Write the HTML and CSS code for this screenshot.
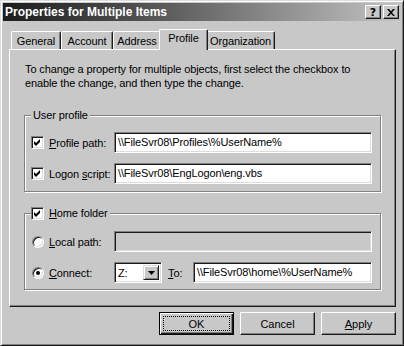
FILE: index.html
```html
<!DOCTYPE html>
<html lang="en">
  <head>
    <meta charset="UTF-8" />
    <title>Properties for Multiple Items</title>
    <link rel="stylesheet" href="styles.css">
  </head>
  <body>
    <div class="window">
      <div class="titlebar">
        <span class="title">Properties for Multiple Items</span>
        <div class="caption">
          <button class="cap">?</button>
          <button class="cap">
            <svg width="8" height="7" viewBox="0 0 8 7"><path d="M0 0h2l2 2.2L6 0h2L5 3.5L8 7H6L4 4.8L2 7H0l3-3.5z" fill="#000"/></svg>
          </button>
        </div>
      </div>

      <div class="tabs">
        <div class="tab t-general">General</div>
        <div class="tab t-account">Account</div>
        <div class="tab t-address">Address</div>
        <div class="tab t-profile active">Profile</div>
        <div class="tab t-org">Organization</div>
      </div>

      <div class="panel">
        <p class="intro">To change a property for multiple objects, first select the checkbox to<br>enable the change, and then type the change.</p>

        <fieldset class="group">
          <legend>User profile</legend>
          <div class="row">
            <span class="check on"></span>
            <span class="lbl"><u>P</u>rofile path:</span>
            <span class="field wide">\\FileSvr08\Profiles\%UserName%</span>
          </div>
          <div class="row">
            <span class="check on"></span>
            <span class="lbl">Logon <u>s</u>cript:</span>
            <span class="field wide">\\FileSvr08\EngLogon\eng.vbs</span>
          </div>
        </fieldset>

        <fieldset class="group home">
          <legend><span class="check on"></span><u>H</u>ome folder</legend>
          <div class="row">
            <span class="radio"></span>
            <span class="lbl"><u>L</u>ocal path:</span>
            <span class="field wide disabled"></span>
          </div>
          <div class="row">
            <span class="radio on"></span>
            <span class="lbl"><u>C</u>onnect:</span>
            <span class="combo">
              <span class="combo-text">Z:</span>
              <span class="combo-btn"><svg width="7" height="4" viewBox="0 0 7 4"><path d="M0 0h7L3.5 4z" fill="#000"/></svg></span>
            </span>
            <span class="to"><u>T</u>o:</span>
            <span class="field narrow">\\FileSvr08\home\%UserName%</span>
          </div>
        </fieldset>
      </div>

      <div class="actions">
        <button class="btn default"><span class="focus">OK</span></button>
        <button class="btn">Cancel</button>
        <button class="btn"><u>A</u>pply</button>
      </div>
    </div>
  </body>
</html>
```
FILE: styles.css
```css
* {
  margin: 0;
  padding: 0;
  box-sizing: border-box;
}
body {
  background: #c8c8c8;
  font-family: "Liberation Sans", Arial, sans-serif;
  font-size: 11px;
  letter-spacing: -0.12px;
  color: #000;
}
u {
  text-decoration: underline;
  text-underline-offset: 1px;
}
.window {
  width: 404px;
  height: 346px;
  background: #c8c8c8;
  border: 1px solid;
  border-color: #dcdcdc #1a1a1a #1a1a1a #dcdcdc;
  box-shadow: inset 1px 1px 0 #fff, inset -1px -1px 0 #808080;
  padding: 2px;
}
.titlebar {
  height: 18px;
  display: flex;
  align-items: center;
  justify-content: space-between;
  padding: 0 2px 0 2px;
  background: linear-gradient(to right, #1c1c1c, #5a5a5a 40%, #c4c4c4);
}
.title {
  color: #fff;
  font-weight: bold;
  font-size: 12px;
  letter-spacing: 0;
  font-family: "Liberation Sans", Arial, sans-serif;
}
.caption {
  display: flex;
  gap: 2px;
}
.cap {
  width: 16px;
  height: 14px;
  background: #c8c8c8;
  border: 1px solid;
  border-color: #fff #1a1a1a #1a1a1a #fff;
  box-shadow: inset -1px -1px 0 #808080;
  font: bold 11px "DejaVu Sans", sans-serif;
  display: flex;
  align-items: center;
  justify-content: center;
  line-height: 1;
}
.tabs {
  display: flex;
  align-items: flex-end;
  height: 20px;
  margin: 8px 0 0 8px;
  position: relative;
  z-index: 1;
}
.tab {
  height: 18px;
  line-height: 16px;
  text-align: center;
  border: 1px solid;
  border-bottom: none;
  border-color: #fff #1a1a1a #1a1a1a #fff;
  border-radius: 2px 2px 0 0;
  box-shadow: inset -1px 0 0 #808080;
  padding-top: 1px;
  background: #c8c8c8;
}
.t-general { width: 50px; }
.t-account { width: 52px; }
.t-address { width: 48px; }
.t-profile { width: 45px; }
.t-org { width: 69px; }
.tab.active {
  height: 21px;
  margin: 0 -2px -1px;
  width: 49px;
  position: relative;
  z-index: 2;
  padding-top: 0;
}
.panel {
  margin-left: 6px;
  width: 387px;
  height: 258px;
  border: 1px solid;
  border-color: #fff #1a1a1a #1a1a1a #fff;
  box-shadow: inset -1px -1px 0 #808080;
  padding: 12px 14px 0;
}
.intro {
  line-height: 14px;
  padding-left: 1px;
}
.group {
  width: 357px;
  margin-top: 18px;
  border: 1px solid #808080;
  box-shadow: 1px 1px 0 #fff, inset 1px 1px 0 #fff;
  padding: 10px 6px 7px;
  display: flex;
  flex-direction: column;
  gap: 10px;
}
.group legend {
  line-height: 14px;
  padding: 0 2px;
  background: #c8c8c8;
  display: flex;
  align-items: center;
}
.group.home {
  margin-top: 14px;
  padding-top: 11px;
  padding-bottom: 6px;
}
.group.home legend {
  padding-left: 0;
}
.group.home legend .check {
  margin-right: 5px;
}
.row {
  display: flex;
  align-items: center;
  height: 21px;
}
.check {
  width: 13px;
  height: 13px;
  flex: none;
  border: 1px solid;
  border-color: #808080 #fff #fff #808080;
  box-shadow: inset 1px 1px 0 #1a1a1a, inset -1px -1px 0 #dcdcdc;
  background: #fff;
  margin-right: 5px;
  display: inline-block;
}
.check.on {
  background: #fff url("data:image/svg+xml,%3Csvg xmlns='http://www.w3.org/2000/svg' width='7' height='7' viewBox='0 0 7 7'%3E%3Cpath d='M0 2L2 4L6 0L6 3L2 7L0 5Z' fill='%23000'/%3E%3C/svg%3E") no-repeat 2px 2px;
}
.radio {
  width: 12px;
  height: 12px;
  flex: none;
  margin: 0 5px 0 1px;
  border-radius: 50%;
  background: #fff;
  border: 1px solid;
  border-color: #808080 #fff #fff #808080;
  box-shadow: inset 1px 1px 0 #1a1a1a, inset -1px -1px 0 #dcdcdc;
  display: flex;
  align-items: center;
  justify-content: center;
}
.radio.on::after {
  content: "";
  width: 4px;
  height: 4px;
  border-radius: 50%;
  background: #000;
}
.lbl {
  width: 65px;
  flex: none;
  white-space: nowrap;
}
.field {
  height: 21px;
  border: 1px solid;
  border-color: #808080 #fff #fff #808080;
  box-shadow: inset 1px 1px 0 #1a1a1a, inset -1px -1px 0 #dcdcdc;
  background: #fff;
  padding: 0 3px;
  line-height: 19px;
  white-space: nowrap;
  overflow: hidden;
}
.field.wide { width: 258px; }
.field.narrow { width: 179px; }
.field.disabled { background: #c8c8c8; }
.combo {
  width: 48px;
  height: 21px;
  display: flex;
  align-items: stretch;
  border: 1px solid;
  border-color: #808080 #fff #fff #808080;
  box-shadow: inset 1px 1px 0 #1a1a1a, inset -1px -1px 0 #dcdcdc;
  background: #fff;
  padding: 2px;
}
.combo-text {
  flex: 1;
  line-height: 17px;
  padding-left: 1px;
}
.combo-btn {
  width: 16px;
  background: #c8c8c8;
  border: 1px solid;
  border-color: #dcdcdc #1a1a1a #1a1a1a #dcdcdc;
  box-shadow: inset 1px 1px 0 #fff, inset -1px -1px 0 #808080;
  display: flex;
  align-items: center;
  justify-content: center;
}
.to {
  width: 25px;
  margin-left: 6px;
}
.actions {
  width: 387px;
  margin: 5px 0 0 6px;
  display: flex;
  justify-content: flex-end;
  gap: 6px;
}
.btn {
  width: 75px;
  height: 23px;
  background: #c8c8c8;
  border: 1px solid;
  border-color: #fff #1a1a1a #1a1a1a #fff;
  box-shadow: inset -1px -1px 0 #808080;
  font: 11px "Liberation Sans", Arial, sans-serif;
  display: flex;
  align-items: center;
  justify-content: center;
}
.btn.default {
  border: 1px solid #000;
  box-shadow: inset 1px 1px 0 #fff, inset -1px -1px 0 #1a1a1a, inset -2px -2px 0 #808080;
  padding: 3px;
}
.focus {
  width: 100%;
  height: 100%;
  border: 1px dotted #000;
  display: flex;
  align-items: center;
  justify-content: center;
}
```
